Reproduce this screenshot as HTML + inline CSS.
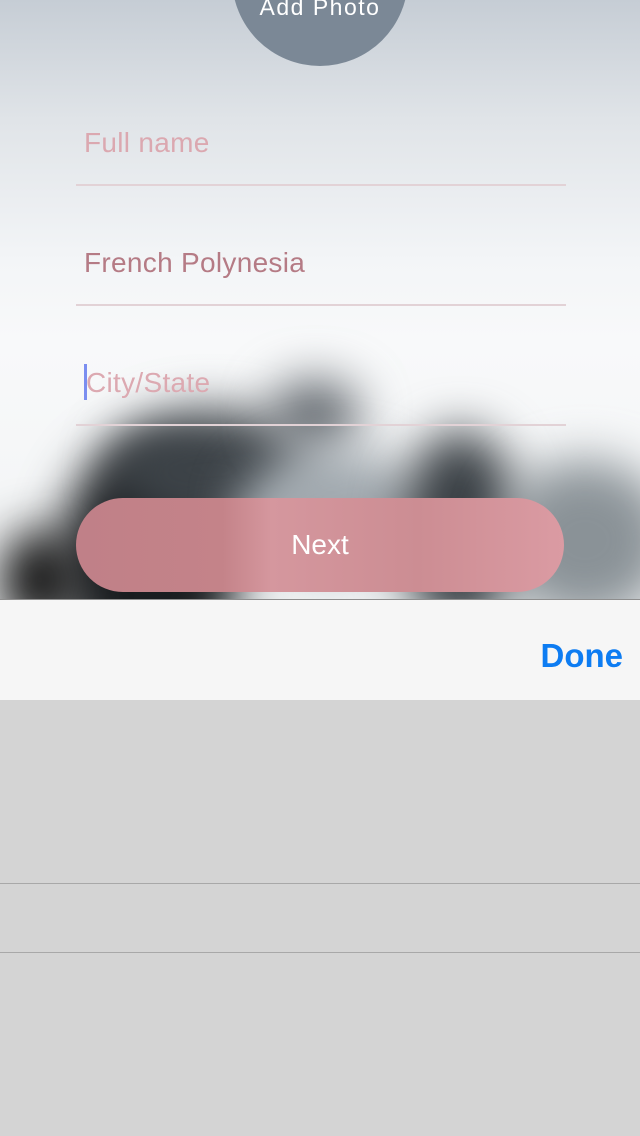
<!DOCTYPE html>
<html><head><style>
*{margin:0;padding:0;box-sizing:border-box}
body{width:640px;height:1136px;overflow:hidden;position:relative;font-family:"Liberation Sans",sans-serif;background:#d4d4d4}
#bg{position:absolute;left:0;top:0;width:640px;height:600px;overflow:hidden;background:linear-gradient(#c6cdd5 0,#e0e4e8 120px,#f3f5f7 260px,#f8f9fa 340px,#f2f4f5 600px)}
.b{position:absolute;border-radius:50%;filter:blur(24px)}
.in{position:absolute;left:84px;font-size:28px;letter-spacing:0.3px}
.ln{position:absolute;left:76px;width:490px;height:2px;background:#e2d2d6}
</style></head><body>
<div id="bg">
 <div class="b" style="left:60px;top:440px;width:180px;height:240px;background:#1a1d20"></div>
 <div class="b" style="left:110px;top:410px;width:200px;height:120px;background:#3c4247"></div>
 <div class="b" style="left:270px;top:380px;width:90px;height:70px;background:#60666c"></div>
 <div class="b" style="left:240px;top:450px;width:180px;height:120px;background:#a0a8ae"></div>
 <div class="b" style="left:400px;top:430px;width:120px;height:200px;background:#3a4045"></div>
 <div class="b" style="left:500px;top:460px;width:170px;height:160px;background:#8a9297"></div>
 <div class="b" style="left:0px;top:530px;width:80px;height:100px;background:#111"></div>
 <div style="position:absolute;left:232px;top:-110px;width:176px;height:176px;border-radius:50%;background:#7b8896"></div>
 <div style="position:absolute;left:232px;top:-6px;width:176px;text-align:center;color:#fff;font-size:23px;letter-spacing:1.5px">Add Photo</div>
 <div class="in" style="top:127px;color:#dba8b0">Full name</div>
 <div class="ln" style="top:184px"></div>
 <div class="in" style="top:247px;color:#b57b85">French Polynesia</div>
 <div class="ln" style="top:304px"></div>
 <div style="position:absolute;left:84px;top:364px;width:3px;height:36px;background:#7b8ef0"></div>
 <div class="in" style="top:367px;left:86px;color:#dca9b1">City/State</div>
 <div class="ln" style="top:424px"></div>
 <div style="position:absolute;left:76px;top:498px;width:488px;height:94px;border-radius:47px;background:linear-gradient(90deg,#c08088 0,#c48389 30%,#d5979e 40%,#cc8d93 70%,#db9ba3 100%);color:#fff;font-size:28px;text-align:center;line-height:94px">Next</div>
</div>
<div style="position:absolute;left:0;top:599px;width:640px;height:1px;background:#8e8e8e"></div>
<div style="position:absolute;left:0;top:600px;width:640px;height:100px;background:#f6f6f6"></div>
<div style="position:absolute;right:17px;top:637px;color:#0d7cf2;font-size:33px;font-weight:bold">Done</div>
<div style="position:absolute;left:0;top:883px;width:640px;height:1px;background:#a8a8a8"></div>
<div style="position:absolute;left:0;top:952px;width:640px;height:1px;background:#a8a8a8"></div>
</body></html>
